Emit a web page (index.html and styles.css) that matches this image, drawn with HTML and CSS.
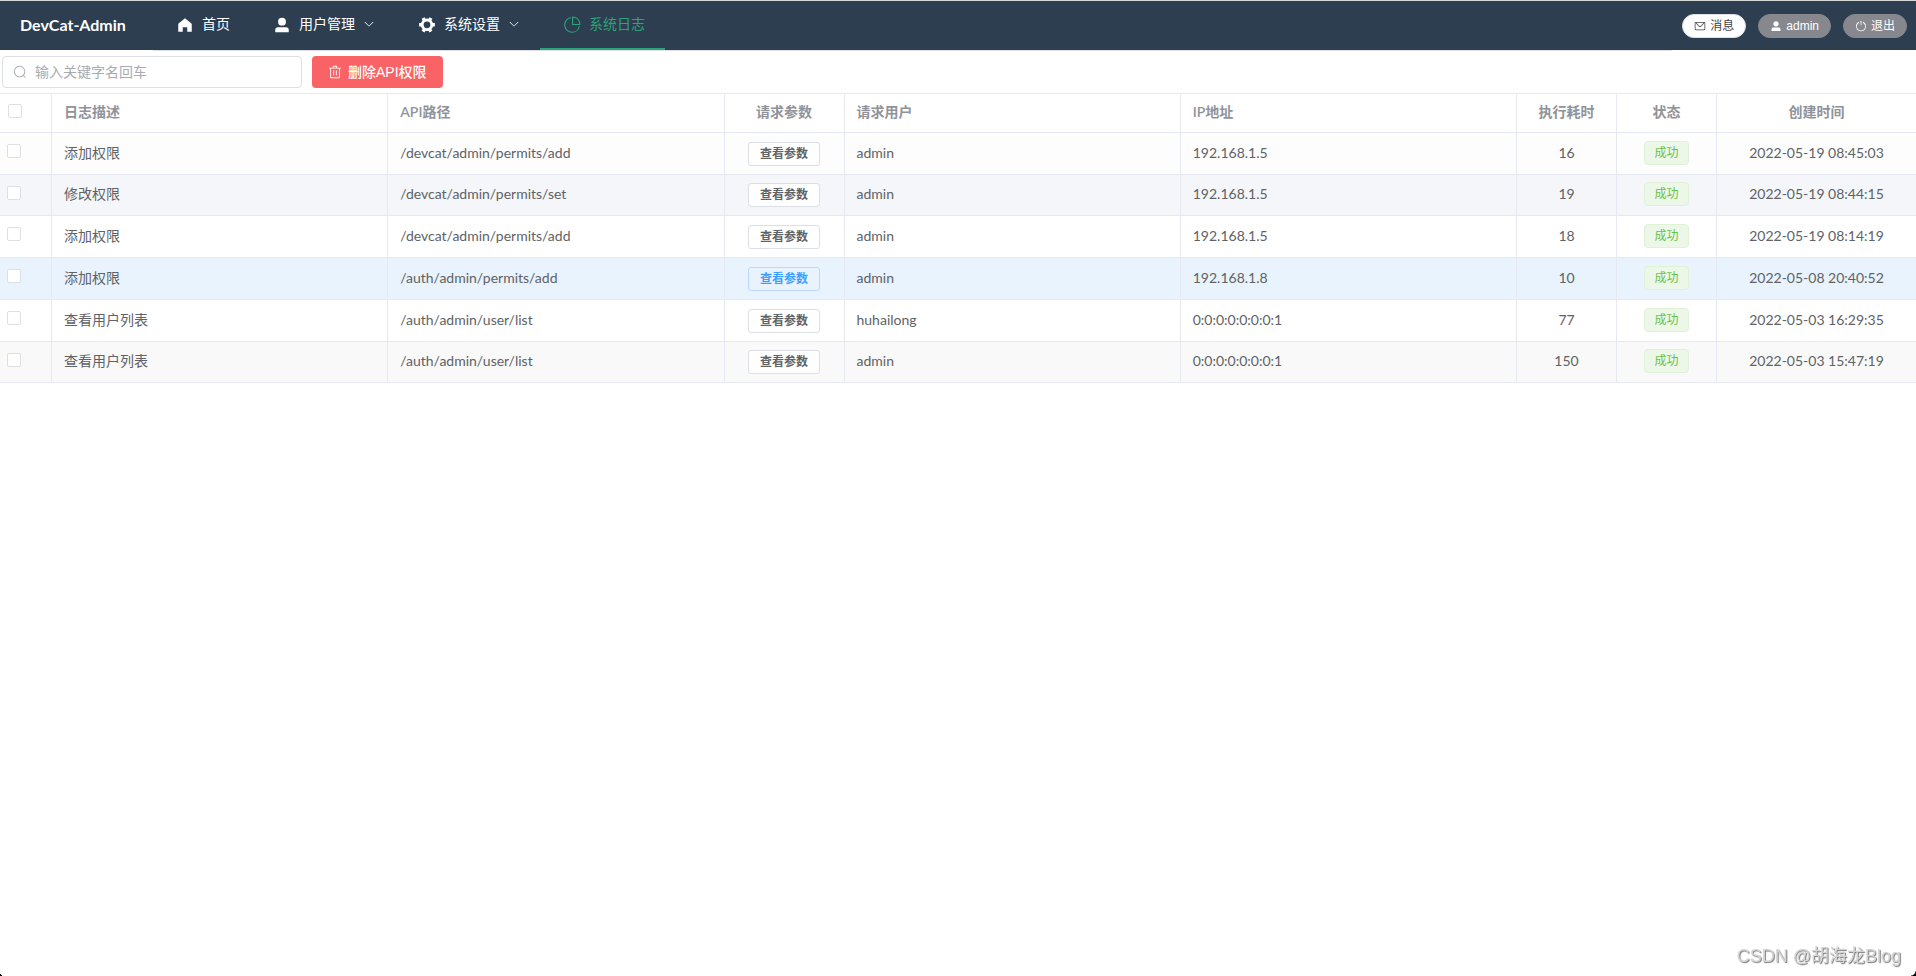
FILE: index.html
```html
<!DOCTYPE html>
<html lang="zh-CN">
<head>
<meta charset="utf-8">
<title>DevCat-Admin</title>
<link rel="stylesheet" href="styles.css">
</head>
<body>
<svg class="sprite" aria-hidden="true">
  <symbol id="i-home" viewBox="0 0 1024 1024"><path d="M512 128 128 447.936V896h255.936V640H640v256h255.936V447.936z"/></symbol>
  <symbol id="i-user" viewBox="0 0 1024 1024"><path d="M288 320a224 224 0 1 0 448 0 224 224 0 1 0-448 0zm544 608H160a32 32 0 0 1-32-32v-96a160 160 0 0 1 160-160h448a160 160 0 0 1 160 160v96a32 32 0 0 1-32 32z"/></symbol>
  <symbol id="i-gear" viewBox="0 0 1024 1024"><path d="M764.416 254.72a351.68 351.68 0 0 1 86.336 149.184H960v192.064H850.752a351.68 351.68 0 0 1-86.336 149.312l54.72 94.72-166.272 96-54.592-94.72a352.64 352.64 0 0 1-172.48 0L371.136 936l-166.272-96 54.72-94.72a351.68 351.68 0 0 1-86.336-149.312H64v-192h109.248a351.68 351.68 0 0 1 86.336-149.312L204.8 160l166.208-96h.192l54.656 94.592a352.64 352.64 0 0 1 172.48 0L652.8 64h.128L819.2 160l-54.72 94.72zM704 499.968a192 192 0 1 0-384 0 192 192 0 0 0 384 0z"/></symbol>
  <symbol id="i-pie" viewBox="0 0 1024 1024"><path d="M448 68.48v64.832A384.128 384.128 0 0 0 512 896a384.128 384.128 0 0 0 378.688-320h64.768A448.128 448.128 0 0 1 64 512 448.128 448.128 0 0 1 448 68.48z"/><path d="M576 97.28V448h350.72A384.064 384.064 0 0 0 576 97.28zM512 64V33.152A448 448 0 0 1 990.848 512H512V64z"/></symbol>
  <symbol id="i-down" viewBox="0 0 1024 1024"><path d="M831.872 340.864 512 652.672 192.128 340.864a30.592 30.592 0 0 0-42.752 0 29.12 29.12 0 0 0 0 41.6L489.664 714.24a32 32 0 0 0 44.672 0l340.288-331.712a29.12 29.12 0 0 0 0-41.728 30.592 30.592 0 0 0-42.752 0z"/></symbol>
  <symbol id="i-search" viewBox="0 0 1024 1024"><path d="m795.904 750.72 124.992 124.928a32 32 0 0 1-45.248 45.248L750.656 795.904a416 416 0 1 1 45.248-45.248zM480 832a352 352 0 1 0 0-704 352 352 0 0 0 0 704z"/></symbol>
  <symbol id="i-trash" viewBox="0 0 1024 1024"><path d="M160 256H96a32 32 0 0 1 0-64h256V95.936a32 32 0 0 1 32-32h256a32 32 0 0 1 32 32V192h256a32 32 0 1 1 0 64h-64v672a32 32 0 0 1-32 32H192a32 32 0 0 1-32-32V256zm448-64v-64H416v64h192zM224 896h576V256H224v640zm192-128a32 32 0 0 1-32-32V416a32 32 0 0 1 64 0v320a32 32 0 0 1-32 32zm192 0a32 32 0 0 1-32-32V416a32 32 0 0 1 64 0v320a32 32 0 0 1-32 32z"/></symbol>
  <symbol id="i-mail" viewBox="0 0 1024 1024"><path d="M128 224v512a64 64 0 0 0 64 64h640a64 64 0 0 0 64-64V224H128zm0-64h768a64 64 0 0 1 64 64v512a128 128 0 0 1-128 128H192A128 128 0 0 1 64 736V224a64 64 0 0 1 64-64z"/><path d="M904 224 656.512 506.88a192 192 0 0 1-289.024 0L120 224h784zm-698.944 0 210.56 240.704a128 128 0 0 0 192.704 0L818.944 224H205.056z"/></symbol>
  <symbol id="i-power" viewBox="0 0 1024 1024"><path d="M352 159.872V230.4a352 352 0 1 0 320 0v-70.528A416.128 416.128 0 0 1 512 960a416 416 0 0 1-160-800.128z"/><path d="M512 64a32 32 0 0 1 32 32v320a32 32 0 0 1-64 0V96a32 32 0 0 1 32-32z"/></symbol>
</svg>

<header class="topbar">
  <h1 class="brand">DevCat-Admin</h1>
  <nav class="menu">
    <a class="menu-item" href="#"><svg class="menu-icon"><use href="#i-home"/></svg>首页</a>
    <a class="menu-item" href="#"><svg class="menu-icon"><use href="#i-user"/></svg>用户管理<svg class="caret"><use href="#i-down"/></svg></a>
    <a class="menu-item" href="#"><svg class="menu-icon"><use href="#i-gear"/></svg>系统设置<svg class="caret"><use href="#i-down"/></svg></a>
    <a class="menu-item active" href="#"><svg class="menu-icon"><use href="#i-pie"/></svg>系统日志</a>
  </nav>
  <div class="account">
    <button class="pill pill-light" type="button"><svg class="pill-icon"><use href="#i-mail"/></svg>消息</button>
    <button class="pill" type="button"><svg class="pill-icon"><use href="#i-user"/></svg>admin</button>
    <button class="pill" type="button"><svg class="pill-icon"><use href="#i-power"/></svg>退出</button>
  </div>
</header>

<main>
  <div class="toolbar">
    <label class="search"><svg class="search-icon"><use href="#i-search"/></svg><input class="search-input" type="text" placeholder="输入关键字名回车" aria-label="输入关键字名回车"></label>
    <button class="danger" type="button"><svg class="danger-icon"><use href="#i-trash"/></svg>删除API权限</button>
  </div>

  <table class="logs">
    <colgroup><col class="c-check"><col><col><col class="c-params"><col><col><col class="c-short"><col class="c-short"><col class="c-time"></colgroup>
    <thead>
      <tr><th class="check check-all"><input type="checkbox" aria-label="全选"></th><th>日志描述</th><th>API路径</th><th class="mid">请求参数</th><th>请求用户</th><th>IP地址</th><th class="mid">执行耗时</th><th class="mid">状态</th><th class="mid">创建时间</th></tr>
    </thead>
    <tbody>
      <tr class="first"><td class="check"><input type="checkbox" aria-label="选择"></td><td>添加权限</td><td>/devcat/admin/permits/add</td><td class="mid"><button class="view" type="button">查看参数</button></td><td>admin</td><td>192.168.1.5</td><td class="mid">16</td><td class="mid"><span class="tag">成功</span></td><td class="mid">2022-05-19 08:45:03</td></tr>
      <tr class="hover"><td class="check"><input type="checkbox" aria-label="选择"></td><td>修改权限</td><td>/devcat/admin/permits/set</td><td class="mid"><button class="view" type="button">查看参数</button></td><td>admin</td><td>192.168.1.5</td><td class="mid">19</td><td class="mid"><span class="tag">成功</span></td><td class="mid">2022-05-19 08:44:15</td></tr>
      <tr><td class="check"><input type="checkbox" aria-label="选择"></td><td>添加权限</td><td>/devcat/admin/permits/add</td><td class="mid"><button class="view" type="button">查看参数</button></td><td>admin</td><td>192.168.1.5</td><td class="mid">18</td><td class="mid"><span class="tag">成功</span></td><td class="mid">2022-05-19 08:14:19</td></tr>
      <tr class="current"><td class="check"><input type="checkbox" aria-label="选择"></td><td>添加权限</td><td>/auth/admin/permits/add</td><td class="mid"><button class="view view-on" type="button">查看参数</button></td><td>admin</td><td>192.168.1.8</td><td class="mid">10</td><td class="mid"><span class="tag">成功</span></td><td class="mid">2022-05-08 20:40:52</td></tr>
      <tr><td class="check"><input type="checkbox" aria-label="选择"></td><td>查看用户列表</td><td>/auth/admin/user/list</td><td class="mid"><button class="view" type="button">查看参数</button></td><td>huhailong</td><td>0:0:0:0:0:0:0:1</td><td class="mid">77</td><td class="mid"><span class="tag">成功</span></td><td class="mid">2022-05-03 16:29:35</td></tr>
      <tr><td class="check"><input type="checkbox" aria-label="选择"></td><td>查看用户列表</td><td>/auth/admin/user/list</td><td class="mid"><button class="view" type="button">查看参数</button></td><td>admin</td><td>0:0:0:0:0:0:0:1</td><td class="mid">150</td><td class="mid"><span class="tag">成功</span></td><td class="mid">2022-05-03 15:47:19</td></tr>
    </tbody>
  </table>
</main>

<p class="watermark">CSDN @胡海龙Blog</p>
<span class="corner corner-left"></span>
<span class="corner corner-right"></span>
</body>
</html>
```
FILE: styles.css
```css
* {
  box-sizing: border-box;
}

body {
  margin: 0;
  background: #fff;
  color: #606266;
  font: 14px/22px Lato, "Noto Sans CJK SC", sans-serif;
}

button,
input {
  margin: 0;
  font-family: "Liberation Sans", "Noto Sans CJK SC", sans-serif;
  line-height: 22px;
}

svg {
  fill: currentColor;
  flex: none;
}

.sprite {
  position: absolute;
  width: 0;
  height: 0;
}

/* Top bar */
.topbar {
  display: flex;
  align-items: flex-start;
  height: 50px;
  border-top: 1px solid #d5d9d8;
  background: #2c3e50;
  color: #fff;
}

.brand {
  width: 153px;
  margin: 0;
  padding-left: 20px;
  font-size: 16px;
  font-weight: 700;
  line-height: 48px;
}

.menu {
  display: flex;
  flex: 1;
  height: 50px;
  border-bottom: 1px solid #dcdfe6;
}

.menu-item {
  display: flex;
  align-items: center;
  height: 49px;
  padding: 0 20px 2px;
  border-bottom: 2px solid transparent;
  color: #fff;
  text-decoration: none;
}

.menu-item.active {
  border-bottom-color: #2ea379;
  color: #2ea379;
}

.menu-icon {
  width: 18px;
  height: 18px;
  margin: 2px 8px 0 3px;
}

.caret {
  width: 12px;
  height: 12px;
  margin-left: 8px;
}

.account {
  display: flex;
  gap: 12px;
  padding: 13px 9px 0 10px;
}

.pill {
  display: flex;
  align-items: center;
  gap: 4px;
  height: 24px;
  padding: 0 11px;
  border: 1px solid #86888e;
  border-radius: 12px;
  background: #86888e;
  color: #fff;
  font-size: 12px;
}

.pill-light {
  border-color: #dcdfe6;
  background: #fff;
  color: #404246;
}

.pill-icon {
  width: 12px;
  height: 12px;
}

/* Search and actions */
.toolbar {
  display: flex;
  gap: 10px;
  padding: 6px 2px 5px;
}

.search {
  display: flex;
  align-items: center;
  gap: 8px;
  width: 300px;
  height: 32px;
  padding: 0 10px;
  border: 1px solid #dcdfe6;
  border-radius: 4px;
  color: #a8abb2;
}

.search-icon {
  width: 14px;
  height: 14px;
}

.search-input {
  flex: 1;
  min-width: 0;
  padding: 0;
  border: 0;
  outline: 0;
  background: none;
  color: #606266;
  font-size: 14px;
}

.search-input::placeholder {
  color: #a8abb2;
}

.danger {
  display: flex;
  align-items: center;
  gap: 6px;
  height: 32px;
  padding: 0 16px;
  border: 0;
  border-radius: 4px;
  background: #f96366;
  color: #fff;
  font-size: 14px;
  font-weight: 500;
}

.danger-icon {
  width: 14px;
  height: 14px;
}

/* Log table */
.logs {
  width: 100%;
  border-top: 1px solid #e6e8f3;
  border-spacing: 0;
  table-layout: fixed;
}

.c-check { width: 52px; }
.c-params { width: 120px; }
.c-short { width: 100px; }
.c-time { width: 199px; }

.logs th,
.logs td {
  height: 42px;
  padding: 0 12px 2px;
  border-right: 1px solid #e6e8f3;
  border-bottom: 1px solid #e6e8f3;
  text-align: left;
}

.logs th {
  height: 39px;
  color: #909399;
  font-weight: 600;
}

.logs tr > :last-child {
  border-right: 0;
}

.logs tbody tr:nth-child(4n + 2) td {
  height: 41px;
}

.logs .first { background: #fdfdfd; }
.logs .hover { background: #f4f6fa; }
.logs .current { background: #e8f3fd; }
.logs tbody tr:last-child { background: #f9f9f9; }

.logs .mid {
  text-align: center;
}

.logs .check {
  padding: 0 0 5px 7px;
  line-height: 0;
}

.logs .check-all {
  padding-left: 8px;
}

.check input {
  width: 14px;
  height: 14px;
  border: 1px solid #dcdfe6;
  border-radius: 2px;
  background: #fff;
  appearance: none;
}

.view {
  display: block;
  height: 24px;
  margin: 2px auto 0;
  padding: 0 11px;
  border: 1px solid #dcdfe6;
  border-radius: 3px;
  background: #fff;
  color: #606266;
  font-size: 12px;
  font-weight: 600;
}

.view-on {
  border-color: #b9dafd;
  background: #e8f3fe;
  color: #409eff;
}

.tag {
  display: block;
  width: fit-content;
  margin: 0 auto;
  padding: 0 9px;
  border: 1px solid #dff2d6;
  border-radius: 4px;
  background: #edf7e8;
  color: #67c250;
  font-size: 12px;
}

/* Window overlay */
.watermark {
  position: fixed;
  right: 15px;
  bottom: 7px;
  margin: 0;
  color: #d4d4d4;
  font: 18px/26px "Liberation Sans", "Noto Sans CJK SC", sans-serif;
  text-shadow: 1px 1px 1px #777;
}

.corner {
  position: fixed;
  bottom: 0;
}

.corner-left {
  left: 0;
  width: 2px;
  height: 2px;
  background: linear-gradient(45deg, #000 50%, transparent 50%);
}

.corner-right {
  right: 0;
  width: 5px;
  height: 5px;
  background: radial-gradient(circle at 0 0, transparent 4px, #000 5px);
}
```
